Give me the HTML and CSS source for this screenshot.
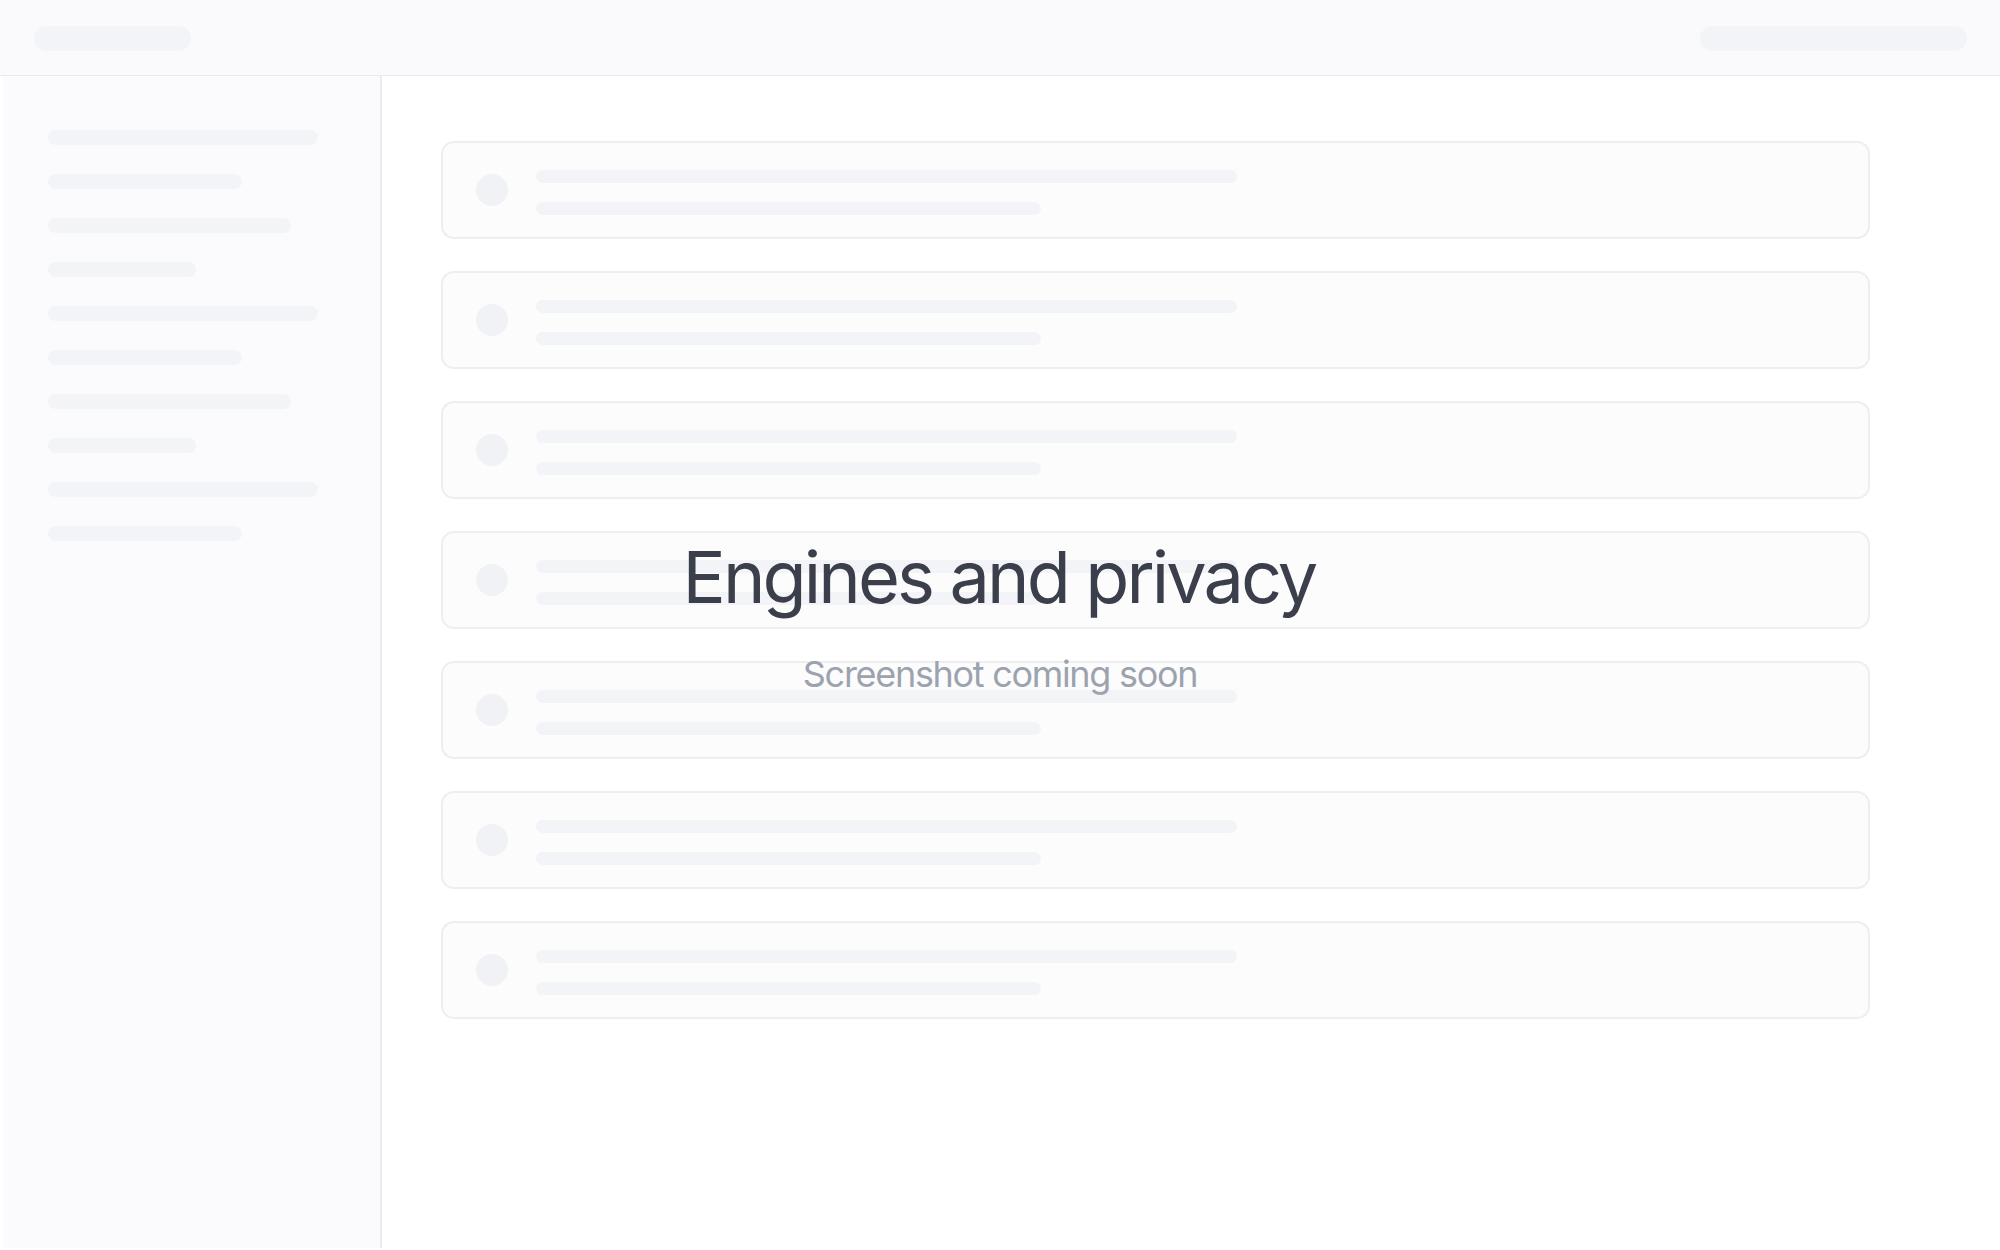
FILE: index.html
```html
<!DOCTYPE html>
<html lang="en">
<head>
<meta charset="utf-8">
<title>Engines and privacy</title>
<link rel="stylesheet" href="styles.css">
</head>
<body>
<div class="app">
  <header class="topbar">
    <div class="pill pill-left"></div>
    <div class="pill pill-right"></div>
  </header>
  <div class="layout">
    <aside class="sidebar">
      <div class="bar w1"></div>
      <div class="bar w2"></div>
      <div class="bar w3"></div>
      <div class="bar w4"></div>
      <div class="bar w1"></div>
      <div class="bar w2"></div>
      <div class="bar w3"></div>
      <div class="bar w4"></div>
      <div class="bar w1"></div>
      <div class="bar w2"></div>
    </aside>
    <main class="main">
      <div class="card"><div class="avatar"></div><div class="lines"><div class="line long"></div><div class="line short"></div></div></div>
      <div class="card"><div class="avatar"></div><div class="lines"><div class="line long"></div><div class="line short"></div></div></div>
      <div class="card"><div class="avatar"></div><div class="lines"><div class="line long"></div><div class="line short"></div></div></div>
      <div class="card"><div class="avatar"></div><div class="lines"><div class="line long"></div><div class="line short"></div></div></div>
      <div class="card"><div class="avatar"></div><div class="lines"><div class="line long"></div><div class="line short"></div></div></div>
      <div class="card"><div class="avatar"></div><div class="lines"><div class="line long"></div><div class="line short"></div></div></div>
      <div class="card"><div class="avatar"></div><div class="lines"><div class="line long"></div><div class="line short"></div></div></div>
    </main>
  </div>
  <div class="overlay">
    <h1 class="title">Engines and privacy</h1>
    <p class="subtitle">Screenshot coming soon</p>
  </div>
</div>
</body>
</html>
```

FILE: styles.css
```css
* { box-sizing: border-box; }

html, body {
  margin: 0;
  padding: 0;
  background: #ffffff;
  font-family: Inter, "Noto Sans", "Liberation Sans", sans-serif;
}

.app {
  position: relative;
  width: 2000px;
  height: 1250px;
  display: flex;
  flex-direction: column;
  overflow: hidden;
}

.topbar {
  height: 76px;
  flex: 0 0 76px;
  background: #fafafc;
  border-bottom: 1px solid #ebebef;
  display: flex;
  align-items: center;
  justify-content: space-between;
  padding: 1px 33px 0 34px;
}

.pill {
  height: 25px;
  border-radius: 13px;
  background: #f3f4f7;
}
.pill-left { width: 157px; }
.pill-right { width: 267px; }

.layout {
  flex: 1;
  display: flex;
  min-height: 0;
}

.sidebar {
  width: 379px;
  flex: 0 0 379px;
  margin: 0 0 2px 3px;
  background: #fbfbfd;
  border-right: 2px solid #ececf0;
  padding: 54px 0 0 45px;
  display: flex;
  flex-direction: column;
  gap: 29px;
}

.bar {
  height: 15px;
  border-radius: 8px;
  background: #f3f4f7;
}
.w1 { width: 270px; }
.w2 { width: 194px; }
.w3 { width: 243px; }
.w4 { width: 148px; }

.main {
  flex: 1;
  padding: 65px 0 0 59px;
  display: flex;
  flex-direction: column;
  gap: 32px;
}

.card {
  width: 1429px;
  height: 98px;
  flex: 0 0 98px;
  border: 2px solid #eeeef1;
  border-radius: 13px;
  background: #fcfcfd;
  display: flex;
  align-items: center;
  padding-left: 33px;
  gap: 28px;
}

.avatar {
  width: 32px;
  height: 32px;
  border-radius: 50%;
  background: #f1f2f5;
  flex: 0 0 32px;
}

.lines {
  display: flex;
  flex-direction: column;
  gap: 19px;
  margin-top: 5px;
}

.line {
  height: 13px;
  border-radius: 7px;
  background: #f3f4f7;
}
.line.long { width: 701px; }
.line.short { width: 505px; }

.overlay {
  position: absolute;
  inset: 0;
  display: flex;
  flex-direction: column;
  align-items: center;
  justify-content: center;
  padding-bottom: 17px;
  pointer-events: none;
}

.title {
  margin: 0;
  font-size: 72px;
  line-height: 80px;
  font-weight: 400;
  color: #3a3f4b;
  letter-spacing: -2.9px;
  transform: translateX(-1px);
}

.subtitle {
  margin: 35px 0 0;
  font-size: 36px;
  line-height: 44px;
  font-weight: 400;
  color: #9ca3af;
  letter-spacing: -1.3px;
}
```
